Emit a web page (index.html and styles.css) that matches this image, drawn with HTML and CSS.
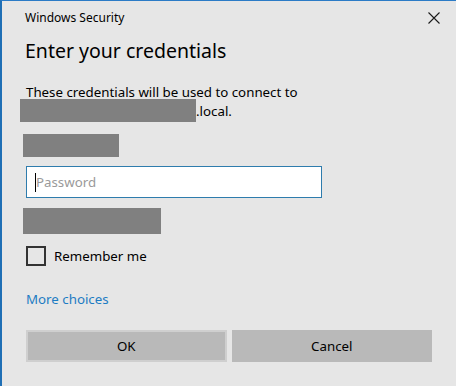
FILE: index.html
```html
<!DOCTYPE html>
<html>
<head>
<link rel="stylesheet" href="styles.css">
</head>
<body>

<div class="dialog">
    <div class="titlebar">
        <span class="title">Windows Security</span>
        <span class="close">
            <svg width="12" height="12" viewBox="0 0 12 12"><path d="M0.5 0.5 L11.5 11.5 M11.5 0.5 L0.5 11.5" stroke="#1a1a1a" stroke-width="1.1" fill="none"/></svg>
        </span>
    </div>

    <h1 class="heading">Enter your credentials</h1>

    <p class="message">These credentials will be used to connect to</p>
    <div class="server"><span class="redact server-name"></span><span>.local.</span></div>

    <div class="redact user-name"></div>

    <div class="field">
        <span class="caret"></span><span class="placeholder">Password</span>
    </div>

    <div class="redact domain"></div>

    <label class="remember">
        <span class="checkbox"></span>
        <span>Remember me</span>
    </label>

    <a class="more" href="#">More choices</a>

    <div class="buttons">
        <button class="btn default">OK</button>
        <button class="btn">Cancel</button>
    </div>
</div>

</body>
</html>
```

FILE: styles.css
```css
body {
    margin: 0;
    font-family: "Noto Sans", "Open Sans", sans-serif;
    background-color: #e6e6e6;
}

/* window frame */
div.dialog {
    height: 385px;
    border-top: 1px solid #2b7bc6;
    border-left: 2px solid #1f6fb5;
    background-color: #e6e6e6;
    color: #000;
}

div.titlebar {
    display: flex;
    justify-content: space-between;
    align-items: center;
    height: 32px;
    padding: 0 16px 0 23px;
}
span.title {
    font-size: 12px;
}
span.close {
    display: flex;
    margin-top: 1px;
}

h1.heading {
    margin: 4px 0 0 23px;
    font-size: 19.5px;
    font-weight: normal;
}

p.message {
    margin: 19px 0 0 24px;
    font-size: 13.3px;
    line-height: 18px;
}

div.server {
    display: flex;
    align-items: center;
    font-size: 13.3px;
    margin: -2px 0 0 18px;
}

.redact {
    background-color: #808080;
}
span.server-name {
    width: 176px;
    height: 23px;
}
div.user-name {
    width: 96px;
    height: 23px;
    margin: 12px 0 0 21px;
}

/* password box */
div.field {
    display: flex;
    align-items: center;
    width: 294px;
    height: 30px;
    margin: 9px 0 0 24px;
    border: 1px solid #2e7cad;
    background-color: #fff;
}
span.caret {
    width: 1px;
    height: 19px;
    margin-left: 8px;
    background-color: #000;
}
span.placeholder {
    font-size: 13.3px;
    color: #9a9a9a;
}

div.domain {
    width: 138px;
    height: 26px;
    margin: 10px 0 0 21px;
}

label.remember {
    display: flex;
    align-items: center;
    gap: 8px;
    margin: 12px 0 0 24px;
    font-size: 13.3px;
}
span.checkbox {
    width: 16px;
    height: 16px;
    border: 2px solid #333;
}

a.more {
    display: block;
    margin: 24px 0 0 24px;
    font-size: 13.3px;
    color: #1d7cc3;
    text-decoration: none;
}

div.buttons {
    display: flex;
    gap: 5px;
    margin: 22px 0 0 24px;
    width: 406px;
}
button.btn {
    flex: 1;
    height: 32px;
    border: 2px solid #b9b9b9;
    background-color: #b9b9b9;
    font-family: inherit;
    font-size: 13.3px;
    color: #000;
}
button.default {
    border-color: #cfcfcf;
}
```
